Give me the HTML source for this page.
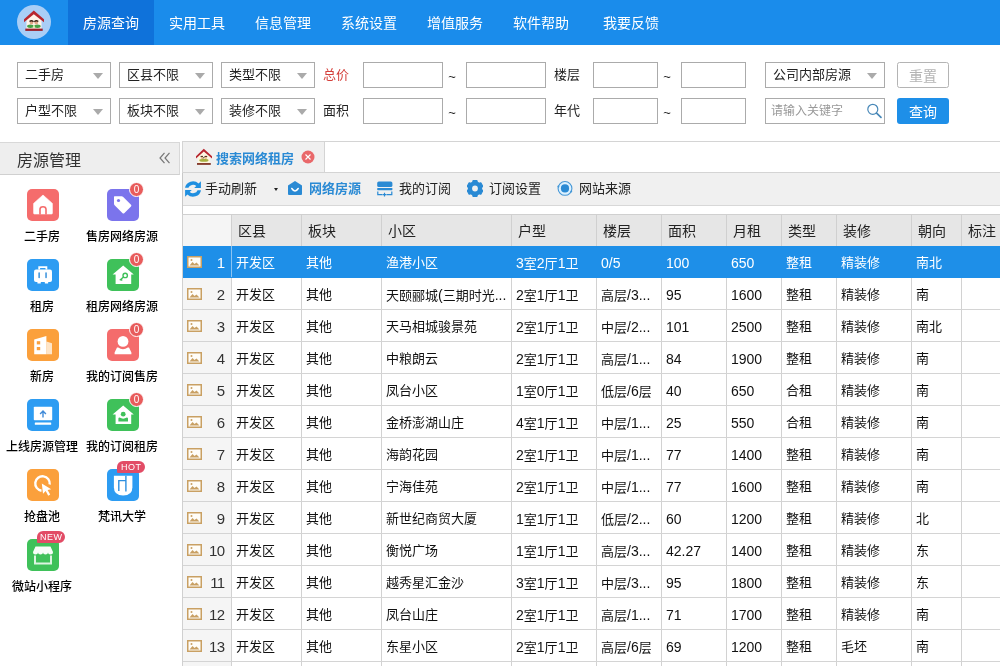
<!DOCTYPE html>
<html lang="zh-CN">
<head>
<meta charset="utf-8">
<title>房源管理</title>
<style>
*{box-sizing:border-box;margin:0;padding:0}
html,body{width:1000px;height:666px;overflow:hidden;background:#fff}
body{will-change:transform}
body{font-family:"Liberation Sans","Noto Sans CJK SC",sans-serif;font-size:13px;color:#222;position:relative}
svg{display:block}
#hdr{position:absolute;left:0;top:0;width:1000px;height:45px;background:#1a8ceb}
#logo{position:absolute;left:17px;top:5px;width:34px;height:34px;border-radius:50%;background:#a9cef6}
#logo svg{position:absolute;left:0;top:0}
.nav{position:absolute;top:0;height:45px;line-height:47px;color:#fff;font-size:14px;text-align:center;width:86px}
.nav.on{background:#0f72da}
.sel,.inp{position:absolute;height:26px;border:1px solid #ababab;background:#fff;font-size:13px;line-height:24px;padding-left:7px;color:#222;white-space:nowrap}
.sel i{position:absolute;right:7px;top:10px;width:0;height:0;border-left:5px solid transparent;border-right:5px solid transparent;border-top:6px solid #aaa}
.kw{font-size:12px;color:#999;padding-left:5px}
.kw svg{position:absolute;right:1px;top:3px}
.lbl{position:absolute;font-size:13px;line-height:26px;height:26px;color:#222;white-space:nowrap}
.lbl.red{color:#d43f3a}
.lbl.tl{width:8px;text-align:center;margin-top:2px}
.btn{position:absolute;width:52px;height:26px;border-radius:3px;font-size:14px;line-height:25px;text-align:center}
.b1{border:1px solid #b4b4b4;color:#b4b4b4;background:#fff;border-radius:2.500px;line-height:26px}
.b2{background:#1e8fe8;color:#fff;line-height:28px}
#sbh{position:absolute;left:0;top:142px;width:180px;height:33px;background:#eee;border-top:1px solid #d8d8d8;border-bottom:1px solid #d0d0d0;border-right:1px solid #d8d8d8;font-size:16px;line-height:35px;padding-left:17px;color:#333}
#sbh svg{position:absolute;left:159px;top:9px}
.ic{position:absolute;width:32px;height:32px;border-radius:5px}
.ic svg{position:absolute;left:0;top:0}
.il{position:absolute;width:100px;text-align:center;font-size:12px;line-height:14px;margin:1px 0 0 -1px;color:#000;font-weight:500;white-space:nowrap}
.bdg{position:absolute;width:15px;height:15px;border-radius:50%;background:#e85c5c;border:1px solid #fff;color:#fff;font-size:10px;line-height:13px;text-align:center}
.tag{position:absolute;width:28px;height:12px;border-radius:6px 6px 6px 1px;background:#e24c66;color:#fff;font-size:9px;line-height:12px;text-align:center;letter-spacing:.4px;padding-left:.4px}
#tabbar{position:absolute;left:182px;top:141px;width:818px;height:32px;border-top:1px solid #d4d4d4;border-bottom:1px solid #d4d4d4;border-left:1px solid #d4d4d4;background:#fff}
#tab{position:absolute;left:0;top:0;width:142px;height:30px;background:#f0f0f0;border-right:1px solid #d4d4d4}
#tab b{position:absolute;left:33px;top:0;line-height:33px;font-size:13px;color:#2a8ad4;white-space:nowrap}
#tab svg.h{position:absolute;left:12px;top:6px}
#tab svg.x{position:absolute;left:118px;top:8px}
#tool{position:absolute;left:183px;top:173px;width:817px;height:33px;background:#f0f0f0;border-bottom:1px solid #d8d8d8}
#vl{position:absolute;left:182px;top:141px;width:1px;height:525px;background:#c8c8c8}
#tool svg{position:absolute;top:8px}
.tt{position:absolute;top:0;line-height:32px;font-size:13px;color:#222;white-space:nowrap}
.tt.blue{color:#2a8ad4}
.dd{position:absolute;left:91px;top:15px;width:0;height:0;border-left:2.500px solid transparent;border-right:2.500px solid transparent;border-top:3px solid #222}
#tbl{position:absolute;left:182px;top:214px;width:818px;height:452px;border-left:1px solid #d0d0d0;border-top:1px solid #d0d0d0;overflow:hidden}
.th{position:absolute;top:0;height:31px;background:#e6e6e6;border-right:1px solid #d0d0d0;font-size:14px;line-height:33px;padding-left:6px;color:#222;white-space:nowrap}
.th0{background:#f5f5f5}
.row{position:absolute;left:0;width:818px;height:32px;border-bottom:1px solid #d4d4d4;background:#fff}
.row.s{background:#1e8fe8;color:#fff;border-bottom-color:#1e8fe8}
.c{position:absolute;top:0;height:31px;line-height:34px;color:#111;padding-left:4px;border-right:1px solid #d2d2d2;font-size:13px;white-space:nowrap;overflow:hidden}
.row.s .c{border-right-color:#1e8fe8;color:#fff}
.c0{left:0;width:49px;background:#f5f5f5;text-align:right;padding-right:6px;font-size:15px;letter-spacing:-.6px;padding-right:6.500px;color:#333}
.n{font-size:14px}
.row.s .c0{background:transparent;color:#fff;border-right-color:#8cc4f2}
.c0 svg{position:absolute;left:4px;top:10px}
</style>
</head>
<body>
<div id="hdr">
<div id="logo"><svg width="34" height="34" viewBox="0 0 34 34"><path d="M9.500 14.500 L16.800 8 L24.500 14.500 V24 H9.500 Z" fill="#fff4ea"/><path d="M7 14.200 L16.800 5.600 L27 14.200 L27 17.200 L16.800 9.200 L7 17.200 Z" fill="#b8262e"/><rect x="8.300" y="23.600" width="17.400" height="2.300" fill="#9c1f2a"/><ellipse cx="13.400" cy="21.200" rx="3.300" ry="1.700" fill="#43a047"/><ellipse cx="20.400" cy="21.200" rx="3.300" ry="1.700" fill="#43a047"/><circle cx="14.500" cy="17.800" r="1.800" fill="#e2a98a"/><circle cx="19.300" cy="17.800" r="1.800" fill="#e2a98a"/><path d="M12.500 16.600 Q14.500 14.800 16.500 16.800 M17.300 16.800 Q19.300 14.800 21.300 16.600" stroke="#3e2416" stroke-width="1.300" fill="none"/><circle cx="16.900" cy="21.600" r="1.100" fill="#c8f0a0"/></svg></div>
<div class="nav on" style="left:68px">房源查询</div>
<div class="nav" style="left:154px">实用工具</div>
<div class="nav" style="left:240px">信息管理</div>
<div class="nav" style="left:326px">系统设置</div>
<div class="nav" style="left:412px">增值服务</div>
<div class="nav" style="left:498px">软件帮助</div>
<div class="nav" style="left:588px">我要反馈</div>
</div>
<div id="flt">
<div class="sel" style="left:17px;top:62px;width:94px">二手房<i></i></div>
<div class="sel" style="left:119px;top:62px;width:94px">区县不限<i></i></div>
<div class="sel" style="left:221px;top:62px;width:94px">类型不限<i></i></div>
<div class="sel" style="left:17px;top:98px;width:94px">户型不限<i></i></div>
<div class="sel" style="left:119px;top:98px;width:94px">板块不限<i></i></div>
<div class="sel" style="left:221px;top:98px;width:94px">装修不限<i></i></div>
<div class="lbl red" style="left:323px;top:62px">总价</div>
<div class="lbl" style="left:323px;top:98px">面积</div>
<div class="inp" style="left:363px;top:62px;width:80px"></div>
<div class="inp" style="left:466px;top:62px;width:80px"></div>
<div class="inp" style="left:363px;top:98px;width:80px"></div>
<div class="inp" style="left:466px;top:98px;width:80px"></div>
<div class="lbl tl" style="left:448px;top:62px">~</div>
<div class="lbl tl" style="left:448px;top:98px">~</div>
<div class="lbl" style="left:554px;top:62px">楼层</div>
<div class="lbl" style="left:554px;top:98px">年代</div>
<div class="inp" style="left:593px;top:62px;width:65px"></div>
<div class="inp" style="left:681px;top:62px;width:65px"></div>
<div class="inp" style="left:593px;top:98px;width:65px"></div>
<div class="inp" style="left:681px;top:98px;width:65px"></div>
<div class="lbl tl" style="left:663px;top:62px">~</div>
<div class="lbl tl" style="left:663px;top:98px">~</div>
<div class="sel" style="left:765px;top:62px;width:120px">公司内部房源<i></i></div>
<div class="inp kw" style="left:765px;top:98px;width:120px">请输入关键字<svg width="18" height="18" viewBox="0 0 18 18"><circle cx="7.800" cy="7.300" r="5" fill="none" stroke="#4888b8" stroke-width="1.200"/><path d="M11.600 11.200 L16 15.400" stroke="#4888b8" stroke-width="1.700" stroke-linecap="round"/></svg></div>
<div class="btn b1" style="left:897px;top:62px">重置</div>
<div class="btn b2" style="left:897px;top:98px">查询</div>
</div>
<div id="sbh">房源管理<svg width="12" height="12" viewBox="0 0 12 12"><path d="M5.5 0.8 L1 6 L5.5 11.2 M10.5 0.8 L6 6 L10.5 11.2" fill="none" stroke="#777" stroke-width="1.2"/></svg></div>
<div class="ic" style="left:27px;top:189px;background:#f56c6c"><svg width="32" height="32" viewBox="0 0 32 32"><path d="M16 6 L25.400 14.400 V24.200 Q25.400 25 24.600 25 H7.400 Q6.600 25 6.600 24.200 V14.400 Z" fill="#fff" stroke="#fff" stroke-width=".6" stroke-linejoin="round"/><path d="M13 25.500 V20.300 Q13 17.700 16 17.700 Q19 17.700 19 20.300 V25.500" fill="none" stroke="#f56c6c" stroke-width="1.600"/></svg></div>
<div class="il" style="left:-7px;top:229px">二手房</div>
<div class="ic" style="left:107px;top:189px;background:#7b74ec"><svg width="32" height="32" viewBox="0 0 32 32"><path d="M7.600 7.200 H14.600 Q15.400 7.200 16 7.800 L24 15.800 Q24.800 16.600 24 17.400 L17.200 24.200 Q16.400 25 15.600 24.200 L7.600 16.200 Q7 15.600 7 14.800 V7.800 Q7 7.200 7.600 7.200 Z" fill="#fff"/><circle cx="11.500" cy="11.500" r="1.600" fill="#7b74ec"/></svg></div>
<div class="bdg" style="left:129px;top:182px">0</div>
<div class="il" style="left:73px;top:229px">售房网络房源</div>
<div class="ic" style="left:27px;top:259px;background:#2d9cf2"><svg width="32" height="32" viewBox="0 0 32 32"><rect x="7" y="10.500" width="18" height="12.600" rx="2" fill="#fff"/><path d="M12.200 10.500 V8.200 H19.400 V10.500" fill="none" stroke="#fff" stroke-width="1.800"/><rect x="10.400" y="22.500" width="3.400" height="2.100" rx=".5" fill="#fff"/><rect x="17.800" y="22.500" width="3.400" height="2.100" rx=".5" fill="#fff"/><rect x="11.300" y="13.200" width="1.700" height="6" rx=".8" fill="#4f9ee0"/><rect x="18.200" y="13.200" width="1.700" height="6" rx=".8" fill="#4f9ee0"/></svg></div>
<div class="il" style="left:-7px;top:299px">租房</div>
<div class="ic" style="left:107px;top:259px;background:#3fc15a"><svg width="32" height="32" viewBox="0 0 32 32"><path d="M16.200 6.500 L26.800 15.600 H24.200 V25 H8.600 V15.600 H5.600 Z" fill="#fff"/><circle cx="18.200" cy="16.400" r="2.200" fill="none" stroke="#3fc15a" stroke-width="1.400"/><path d="M16.600 18 L12.800 21.300 M14 20.200 L15.200 21.500" stroke="#3fc15a" stroke-width="1.400" fill="none"/></svg></div>
<div class="bdg" style="left:129px;top:252px">0</div>
<div class="il" style="left:73px;top:299px">租房网络房源</div>
<div class="ic" style="left:27px;top:329px;background:#fba03c"><svg width="32" height="32" viewBox="0 0 32 32"><path d="M7.200 10.500 L19.400 7 V25.200 H7.200 Z" fill="#fff"/><path d="M19.400 12.500 L25 14.300 V25.200 H19.400 Z" fill="#fff" opacity=".72"/><rect x="9.800" y="12.200" width="3.400" height="3.200" fill="#fba03c"/><rect x="9.800" y="18" width="3.400" height="3.200" fill="#fba03c"/></svg></div>
<div class="il" style="left:-7px;top:369px">新房</div>
<div class="ic" style="left:107px;top:329px;background:#f46c6c"><svg width="32" height="32" viewBox="0 0 32 32"><circle cx="16" cy="12.400" r="5.400" fill="#fff"/><path d="M7.600 25.300 V23.500 L10 18.600 H11.200 Q16 22 20.800 18.600 H22 L24.400 23.500 V25.300 Z" fill="#fff"/></svg></div>
<div class="bdg" style="left:129px;top:322px">0</div>
<div class="il" style="left:73px;top:369px">我的订阅售房</div>
<div class="ic" style="left:27px;top:399px;background:#2d9cf2"><svg width="32" height="32" viewBox="0 0 32 32"><rect x="6.800" y="7.800" width="18.400" height="13.400" rx=".8" fill="#fff"/><rect x="7.800" y="23.600" width="16.400" height="2.200" rx=".5" fill="#fff"/><path d="M16 11 L19.400 14.400 L18.400 15.400 L16.700 13.700 V18.400 H15.300 V13.700 L13.600 15.400 L12.600 14.400 Z" fill="#3f8ad8"/></svg></div>
<div class="il" style="left:-7px;top:439px">上线房源管理</div>
<div class="ic" style="left:107px;top:399px;background:#3fc15a"><svg width="32" height="32" viewBox="0 0 32 32"><path d="M16.200 6.500 L26.800 15.600 H24.200 V25 H8.600 V15.600 H5.600 Z" fill="#fff"/><circle cx="16.200" cy="15.200" r="2.400" fill="#3fc15a"/><path d="M11.400 22.600 V19.600 Q11.400 18.600 12.600 18.600 Q16.200 20.800 19.800 18.600 Q21 18.600 21 19.600 V22.600 Z" fill="#3fc15a"/></svg></div>
<div class="bdg" style="left:129px;top:392px">0</div>
<div class="il" style="left:73px;top:439px">我的订阅租房</div>
<div class="ic" style="left:27px;top:469px;background:#fba03c"><svg width="32" height="32" viewBox="0 0 32 32"><path d="M22.700 15.500 A7.250 7.250 0 1 0 14.500 21.700" fill="none" stroke="#fff" stroke-width="2.400"/><path d="M14.800 14.500 L24.200 20.200 L20.600 21 L23.200 25.600 L21.200 26.700 L18.700 22.100 L16 24.800 Z" fill="#fff"/></svg></div>
<div class="il" style="left:-7px;top:509px">抢盘池</div>
<div class="ic" style="left:107px;top:469px;background:#2d9cf2"><svg width="32" height="32" viewBox="0 0 32 32"><path d="M6.900 6.800 H25.400 V18.200 Q25.400 26.400 16.150 26.400 Q6.900 26.400 6.900 18.200 Z" fill="#fff"/><path d="M18.900 6.800 V22.400 M18.900 11.600 H11.800 V22" fill="none" stroke="#2d8fe0" stroke-width="1.400"/></svg></div>
<div class="tag" style="left:117px;top:461px">HOT</div>
<div class="il" style="left:73px;top:509px">梵讯大学</div>
<div class="ic" style="left:27px;top:539px;background:#3fc15a"><svg width="32" height="32" viewBox="0 0 32 32"><path d="M8.500 7.500 H23.500 L26 13 Q26 15.500 23.500 15.500 Q21 15.500 21 13.500 Q21 15.500 18.500 15.500 Q16 15.500 16 13.500 Q16 15.500 13.500 15.500 Q11 15.500 11 13.500 Q11 15.500 8.500 15.500 Q6 15.500 6 13 Z" fill="#fff" opacity=".96"/><path d="M8 16.500 V24.600 H24 V16.500" fill="none" stroke="#fff" stroke-width="2" opacity=".82"/></svg></div>
<div class="tag" style="left:37px;top:531px">NEW</div>
<div class="il" style="left:-7px;top:579px">微站小程序</div>
<div id="vl"></div>
<div id="tabbar"><div id="tab"><svg class="h" width="18" height="18" viewBox="0 0 18 18"><path d="M3 8.500 L8.800 3.500 L14.800 8.500 V15.500 H3 Z" fill="#fff6e0"/><path d="M1 8.200 L8.800 0.800 L17 8.200 L17 10.500 L8.800 3.400 L1 10.500 Z" fill="#b8262e"/><rect x="2" y="15.100" width="13.800" height="1.700" fill="#7a2a1a"/><ellipse cx="8.900" cy="12.200" rx="4.600" ry="1.500" fill="#a8b040"/><circle cx="7" cy="9.800" r="1.300" fill="#e8c090"/><circle cx="10.800" cy="9.800" r="1.300" fill="#e8c090"/><path d="M5.600 8.400 H8 M9.800 8.400 H12.200 M9.600 8.600 L8.200 10.400" stroke="#3e2416" stroke-width="1" fill="none"/></svg><b>搜索网络租房</b><svg class="x" width="14" height="14" viewBox="0 0 14 14"><circle cx="7" cy="7" r="6.500" fill="#e9686a"/><path d="M4.500 4.500 L9.500 9.500 M9.500 4.500 L4.500 9.500" stroke="#fff" stroke-width="1.100"/></svg></div></div>
<div id="tool">
<svg style="left:1px;top:7px" width="18" height="18" viewBox="0 0 18 18"><path d="M1 7.800 A8 7.800 0 0 1 14.600 3.600 L16.900 1.200 V8 H10.200 L12.300 5.900 A5 4.800 0 0 0 4.400 7.800 Z" fill="#1f8fe0"/><path d="M17 10.200 A8 7.800 0 0 1 3.400 14.400 L1.100 16.800 V10 H7.800 L5.700 12.100 A5 4.800 0 0 0 13.600 10.200 Z" fill="#1f8fe0"/></svg>
<span class="tt" style="left:22px">手动刷新</span>
<i class="dd"></i>
<svg style="left:104px;top:7px" width="16" height="16" viewBox="0 0 16 16"><path d="M8 1 L15 5.500 V14 Q15 15 14 15 H2 Q1 15 1 14 V5.500 Z" fill="#2a8ad4"/><path d="M4.800 8.500 Q8 13.500 11.200 8.500" fill="none" stroke="#fff" stroke-width="1.500" stroke-linecap="round"/></svg>
<b class="tt blue" style="left:126px">网络房源</b>
<svg style="left:194px;top:7.500px" width="16" height="16" viewBox="0 0 16 16"><rect x=".2" y=".5" width="15.200" height="5.600" rx="1.600" fill="#2a8ad4"/><rect x=".2" y="6.900" width="15.200" height="2.300" rx=".6" fill="#2a8ad4"/><path d="M.8 10.600 V13.600 H5.400 M9.600 13.600 H14.800 V10.600" fill="none" stroke="#2a8ad4" stroke-width="1.200"/><path d="M5.600 13.600 H9.400 M7.500 11.800 V15.400" stroke="#2a8ad4" stroke-width="1.200"/></svg>
<span class="tt" style="left:216px">我的订阅</span>
<svg style="left:284px;top:7px" width="16" height="17" viewBox="0 0 16 17"><path d="M10.37 2.34 L9.96 0.64 L6.04 0.64 L5.63 2.34 L3.85 3.37 L2.17 2.87 L0.21 6.27 L1.48 7.47 L1.48 9.53 L0.21 10.73 L2.17 14.13 L3.85 13.63 L5.63 14.66 L6.04 16.36 L9.96 16.36 L10.37 14.66 L12.15 13.63 L13.83 14.13 L15.79 10.73 L14.52 9.53 L14.52 7.47 L15.79 6.27 L13.83 2.87 L12.15 3.37 Z" fill="#2a8ad4" stroke="#2a8ad4" stroke-width="1.2" stroke-linejoin="round"/><circle cx="8" cy="8.500" r="2.900" fill="#f0f0f0"/></svg>
<span class="tt" style="left:306px">订阅设置</span>
<svg style="left:373px;top:7px" width="18" height="17" viewBox="0 0 18 17"><circle cx="9" cy="8.400" r="6.900" fill="#dcf1ff" stroke="#4597d6" stroke-width="1.100"/><circle cx="9" cy="8.400" r="4.100" fill="#2a8ad4"/><circle cx="2.400" cy="6.600" r="1" fill="#4597d6"/><circle cx="15.200" cy="11.600" r="1" fill="#4597d6"/></svg>
<span class="tt" style="left:396px">网站来源</span>
</div>
<div id="tbl">
<div class="th th0" style="left:0;width:49px"></div>
<div class="th" style="left:49px;width:70px">区县</div>
<div class="th" style="left:119px;width:80px">板块</div>
<div class="th" style="left:199px;width:130px">小区</div>
<div class="th" style="left:329px;width:85px">户型</div>
<div class="th" style="left:414px;width:65px">楼层</div>
<div class="th" style="left:479px;width:65px">面积</div>
<div class="th" style="left:544px;width:55px">月租</div>
<div class="th" style="left:599px;width:55px">类型</div>
<div class="th" style="left:654px;width:75px">装修</div>
<div class="th" style="left:729px;width:50px">朝向</div>
<div class="th" style="left:779px;width:60px">标注</div>
<div class="row s" style="top:31px">
<div class="c c0"><svg width="15" height="12" viewBox="0 0 15 12"><rect x=".75" y=".75" width="13.500" height="10.500" fill="#fffdf8" stroke="#c9a063" stroke-width="1.500"/><path d="M2.500 9.500 L5.500 6 L7.500 8 L9.500 6.500 L12.500 9.500 Z" fill="#c9a063"/><circle cx="4.500" cy="4" r="1" fill="#c9a063"/></svg>1</div>
<div class="c" style="left:49px;width:70px">开发区</div>
<div class="c" style="left:119px;width:80px">其他</div>
<div class="c" style="left:199px;width:130px">渔港小区</div>
<div class="c" style="left:329px;width:85px"><span class="n">3</span>室<span class="n">2</span>厅<span class="n">1</span>卫</div>
<div class="c" style="left:414px;width:65px"><span class="n">0/5</span></div>
<div class="c" style="left:479px;width:65px"><span class="n">100</span></div>
<div class="c" style="left:544px;width:55px"><span class="n">650</span></div>
<div class="c" style="left:599px;width:55px">整租</div>
<div class="c" style="left:654px;width:75px">精装修</div>
<div class="c" style="left:729px;width:50px">南北</div>
<div class="c" style="left:779px;width:60px"></div>
</div>
<div class="row" style="top:63px">
<div class="c c0"><svg width="15" height="12" viewBox="0 0 15 12"><rect x=".75" y=".75" width="13.500" height="10.500" fill="#fffdf8" stroke="#c9a063" stroke-width="1.500"/><path d="M2.500 9.500 L5.500 6 L7.500 8 L9.500 6.500 L12.500 9.500 Z" fill="#c9a063"/><circle cx="4.500" cy="4" r="1" fill="#c9a063"/></svg>2</div>
<div class="c" style="left:49px;width:70px">开发区</div>
<div class="c" style="left:119px;width:80px">其他</div>
<div class="c" style="left:199px;width:130px">天颐郦城<span class="n">(</span>三期时光<span class="n">...</span></div>
<div class="c" style="left:329px;width:85px"><span class="n">2</span>室<span class="n">1</span>厅<span class="n">1</span>卫</div>
<div class="c" style="left:414px;width:65px">高层<span class="n">/3...</span></div>
<div class="c" style="left:479px;width:65px"><span class="n">95</span></div>
<div class="c" style="left:544px;width:55px"><span class="n">1600</span></div>
<div class="c" style="left:599px;width:55px">整租</div>
<div class="c" style="left:654px;width:75px">精装修</div>
<div class="c" style="left:729px;width:50px">南</div>
<div class="c" style="left:779px;width:60px"></div>
</div>
<div class="row" style="top:95px">
<div class="c c0"><svg width="15" height="12" viewBox="0 0 15 12"><rect x=".75" y=".75" width="13.500" height="10.500" fill="#fffdf8" stroke="#c9a063" stroke-width="1.500"/><path d="M2.500 9.500 L5.500 6 L7.500 8 L9.500 6.500 L12.500 9.500 Z" fill="#c9a063"/><circle cx="4.500" cy="4" r="1" fill="#c9a063"/></svg>3</div>
<div class="c" style="left:49px;width:70px">开发区</div>
<div class="c" style="left:119px;width:80px">其他</div>
<div class="c" style="left:199px;width:130px">天马相城骏景苑</div>
<div class="c" style="left:329px;width:85px"><span class="n">2</span>室<span class="n">1</span>厅<span class="n">1</span>卫</div>
<div class="c" style="left:414px;width:65px">中层<span class="n">/2...</span></div>
<div class="c" style="left:479px;width:65px"><span class="n">101</span></div>
<div class="c" style="left:544px;width:55px"><span class="n">2500</span></div>
<div class="c" style="left:599px;width:55px">整租</div>
<div class="c" style="left:654px;width:75px">精装修</div>
<div class="c" style="left:729px;width:50px">南北</div>
<div class="c" style="left:779px;width:60px"></div>
</div>
<div class="row" style="top:127px">
<div class="c c0"><svg width="15" height="12" viewBox="0 0 15 12"><rect x=".75" y=".75" width="13.500" height="10.500" fill="#fffdf8" stroke="#c9a063" stroke-width="1.500"/><path d="M2.500 9.500 L5.500 6 L7.500 8 L9.500 6.500 L12.500 9.500 Z" fill="#c9a063"/><circle cx="4.500" cy="4" r="1" fill="#c9a063"/></svg>4</div>
<div class="c" style="left:49px;width:70px">开发区</div>
<div class="c" style="left:119px;width:80px">其他</div>
<div class="c" style="left:199px;width:130px">中粮朗云</div>
<div class="c" style="left:329px;width:85px"><span class="n">2</span>室<span class="n">1</span>厅<span class="n">1</span>卫</div>
<div class="c" style="left:414px;width:65px">高层<span class="n">/1...</span></div>
<div class="c" style="left:479px;width:65px"><span class="n">84</span></div>
<div class="c" style="left:544px;width:55px"><span class="n">1900</span></div>
<div class="c" style="left:599px;width:55px">整租</div>
<div class="c" style="left:654px;width:75px">精装修</div>
<div class="c" style="left:729px;width:50px">南</div>
<div class="c" style="left:779px;width:60px"></div>
</div>
<div class="row" style="top:159px">
<div class="c c0"><svg width="15" height="12" viewBox="0 0 15 12"><rect x=".75" y=".75" width="13.500" height="10.500" fill="#fffdf8" stroke="#c9a063" stroke-width="1.500"/><path d="M2.500 9.500 L5.500 6 L7.500 8 L9.500 6.500 L12.500 9.500 Z" fill="#c9a063"/><circle cx="4.500" cy="4" r="1" fill="#c9a063"/></svg>5</div>
<div class="c" style="left:49px;width:70px">开发区</div>
<div class="c" style="left:119px;width:80px">其他</div>
<div class="c" style="left:199px;width:130px">凤台小区</div>
<div class="c" style="left:329px;width:85px"><span class="n">1</span>室<span class="n">0</span>厅<span class="n">1</span>卫</div>
<div class="c" style="left:414px;width:65px">低层<span class="n">/6</span>层</div>
<div class="c" style="left:479px;width:65px"><span class="n">40</span></div>
<div class="c" style="left:544px;width:55px"><span class="n">650</span></div>
<div class="c" style="left:599px;width:55px">合租</div>
<div class="c" style="left:654px;width:75px">精装修</div>
<div class="c" style="left:729px;width:50px">南</div>
<div class="c" style="left:779px;width:60px"></div>
</div>
<div class="row" style="top:191px">
<div class="c c0"><svg width="15" height="12" viewBox="0 0 15 12"><rect x=".75" y=".75" width="13.500" height="10.500" fill="#fffdf8" stroke="#c9a063" stroke-width="1.500"/><path d="M2.500 9.500 L5.500 6 L7.500 8 L9.500 6.500 L12.500 9.500 Z" fill="#c9a063"/><circle cx="4.500" cy="4" r="1" fill="#c9a063"/></svg>6</div>
<div class="c" style="left:49px;width:70px">开发区</div>
<div class="c" style="left:119px;width:80px">其他</div>
<div class="c" style="left:199px;width:130px">金桥澎湖山庄</div>
<div class="c" style="left:329px;width:85px"><span class="n">4</span>室<span class="n">1</span>厅<span class="n">1</span>卫</div>
<div class="c" style="left:414px;width:65px">中层<span class="n">/1...</span></div>
<div class="c" style="left:479px;width:65px"><span class="n">25</span></div>
<div class="c" style="left:544px;width:55px"><span class="n">550</span></div>
<div class="c" style="left:599px;width:55px">合租</div>
<div class="c" style="left:654px;width:75px">精装修</div>
<div class="c" style="left:729px;width:50px">南</div>
<div class="c" style="left:779px;width:60px"></div>
</div>
<div class="row" style="top:223px">
<div class="c c0"><svg width="15" height="12" viewBox="0 0 15 12"><rect x=".75" y=".75" width="13.500" height="10.500" fill="#fffdf8" stroke="#c9a063" stroke-width="1.500"/><path d="M2.500 9.500 L5.500 6 L7.500 8 L9.500 6.500 L12.500 9.500 Z" fill="#c9a063"/><circle cx="4.500" cy="4" r="1" fill="#c9a063"/></svg>7</div>
<div class="c" style="left:49px;width:70px">开发区</div>
<div class="c" style="left:119px;width:80px">其他</div>
<div class="c" style="left:199px;width:130px">海韵花园</div>
<div class="c" style="left:329px;width:85px"><span class="n">2</span>室<span class="n">1</span>厅<span class="n">1</span>卫</div>
<div class="c" style="left:414px;width:65px">中层<span class="n">/1...</span></div>
<div class="c" style="left:479px;width:65px"><span class="n">77</span></div>
<div class="c" style="left:544px;width:55px"><span class="n">1400</span></div>
<div class="c" style="left:599px;width:55px">整租</div>
<div class="c" style="left:654px;width:75px">精装修</div>
<div class="c" style="left:729px;width:50px">南</div>
<div class="c" style="left:779px;width:60px"></div>
</div>
<div class="row" style="top:255px">
<div class="c c0"><svg width="15" height="12" viewBox="0 0 15 12"><rect x=".75" y=".75" width="13.500" height="10.500" fill="#fffdf8" stroke="#c9a063" stroke-width="1.500"/><path d="M2.500 9.500 L5.500 6 L7.500 8 L9.500 6.500 L12.500 9.500 Z" fill="#c9a063"/><circle cx="4.500" cy="4" r="1" fill="#c9a063"/></svg>8</div>
<div class="c" style="left:49px;width:70px">开发区</div>
<div class="c" style="left:119px;width:80px">其他</div>
<div class="c" style="left:199px;width:130px">宁海佳苑</div>
<div class="c" style="left:329px;width:85px"><span class="n">2</span>室<span class="n">1</span>厅<span class="n">1</span>卫</div>
<div class="c" style="left:414px;width:65px">中层<span class="n">/1...</span></div>
<div class="c" style="left:479px;width:65px"><span class="n">77</span></div>
<div class="c" style="left:544px;width:55px"><span class="n">1600</span></div>
<div class="c" style="left:599px;width:55px">整租</div>
<div class="c" style="left:654px;width:75px">精装修</div>
<div class="c" style="left:729px;width:50px">南</div>
<div class="c" style="left:779px;width:60px"></div>
</div>
<div class="row" style="top:287px">
<div class="c c0"><svg width="15" height="12" viewBox="0 0 15 12"><rect x=".75" y=".75" width="13.500" height="10.500" fill="#fffdf8" stroke="#c9a063" stroke-width="1.500"/><path d="M2.500 9.500 L5.500 6 L7.500 8 L9.500 6.500 L12.500 9.500 Z" fill="#c9a063"/><circle cx="4.500" cy="4" r="1" fill="#c9a063"/></svg>9</div>
<div class="c" style="left:49px;width:70px">开发区</div>
<div class="c" style="left:119px;width:80px">其他</div>
<div class="c" style="left:199px;width:130px">新世纪商贸大厦</div>
<div class="c" style="left:329px;width:85px"><span class="n">1</span>室<span class="n">1</span>厅<span class="n">1</span>卫</div>
<div class="c" style="left:414px;width:65px">低层<span class="n">/2...</span></div>
<div class="c" style="left:479px;width:65px"><span class="n">60</span></div>
<div class="c" style="left:544px;width:55px"><span class="n">1200</span></div>
<div class="c" style="left:599px;width:55px">整租</div>
<div class="c" style="left:654px;width:75px">精装修</div>
<div class="c" style="left:729px;width:50px">北</div>
<div class="c" style="left:779px;width:60px"></div>
</div>
<div class="row" style="top:319px">
<div class="c c0"><svg width="15" height="12" viewBox="0 0 15 12"><rect x=".75" y=".75" width="13.500" height="10.500" fill="#fffdf8" stroke="#c9a063" stroke-width="1.500"/><path d="M2.500 9.500 L5.500 6 L7.500 8 L9.500 6.500 L12.500 9.500 Z" fill="#c9a063"/><circle cx="4.500" cy="4" r="1" fill="#c9a063"/></svg>10</div>
<div class="c" style="left:49px;width:70px">开发区</div>
<div class="c" style="left:119px;width:80px">其他</div>
<div class="c" style="left:199px;width:130px">衡悦广场</div>
<div class="c" style="left:329px;width:85px"><span class="n">1</span>室<span class="n">1</span>厅<span class="n">1</span>卫</div>
<div class="c" style="left:414px;width:65px">高层<span class="n">/3...</span></div>
<div class="c" style="left:479px;width:65px"><span class="n">42.27</span></div>
<div class="c" style="left:544px;width:55px"><span class="n">1400</span></div>
<div class="c" style="left:599px;width:55px">整租</div>
<div class="c" style="left:654px;width:75px">精装修</div>
<div class="c" style="left:729px;width:50px">东</div>
<div class="c" style="left:779px;width:60px"></div>
</div>
<div class="row" style="top:351px">
<div class="c c0"><svg width="15" height="12" viewBox="0 0 15 12"><rect x=".75" y=".75" width="13.500" height="10.500" fill="#fffdf8" stroke="#c9a063" stroke-width="1.500"/><path d="M2.500 9.500 L5.500 6 L7.500 8 L9.500 6.500 L12.500 9.500 Z" fill="#c9a063"/><circle cx="4.500" cy="4" r="1" fill="#c9a063"/></svg>11</div>
<div class="c" style="left:49px;width:70px">开发区</div>
<div class="c" style="left:119px;width:80px">其他</div>
<div class="c" style="left:199px;width:130px">越秀星汇金沙</div>
<div class="c" style="left:329px;width:85px"><span class="n">3</span>室<span class="n">1</span>厅<span class="n">1</span>卫</div>
<div class="c" style="left:414px;width:65px">中层<span class="n">/3...</span></div>
<div class="c" style="left:479px;width:65px"><span class="n">95</span></div>
<div class="c" style="left:544px;width:55px"><span class="n">1800</span></div>
<div class="c" style="left:599px;width:55px">整租</div>
<div class="c" style="left:654px;width:75px">精装修</div>
<div class="c" style="left:729px;width:50px">东</div>
<div class="c" style="left:779px;width:60px"></div>
</div>
<div class="row" style="top:383px">
<div class="c c0"><svg width="15" height="12" viewBox="0 0 15 12"><rect x=".75" y=".75" width="13.500" height="10.500" fill="#fffdf8" stroke="#c9a063" stroke-width="1.500"/><path d="M2.500 9.500 L5.500 6 L7.500 8 L9.500 6.500 L12.500 9.500 Z" fill="#c9a063"/><circle cx="4.500" cy="4" r="1" fill="#c9a063"/></svg>12</div>
<div class="c" style="left:49px;width:70px">开发区</div>
<div class="c" style="left:119px;width:80px">其他</div>
<div class="c" style="left:199px;width:130px">凤台山庄</div>
<div class="c" style="left:329px;width:85px"><span class="n">2</span>室<span class="n">1</span>厅<span class="n">1</span>卫</div>
<div class="c" style="left:414px;width:65px">高层<span class="n">/1...</span></div>
<div class="c" style="left:479px;width:65px"><span class="n">71</span></div>
<div class="c" style="left:544px;width:55px"><span class="n">1700</span></div>
<div class="c" style="left:599px;width:55px">整租</div>
<div class="c" style="left:654px;width:75px">精装修</div>
<div class="c" style="left:729px;width:50px">南</div>
<div class="c" style="left:779px;width:60px"></div>
</div>
<div class="row" style="top:415px">
<div class="c c0"><svg width="15" height="12" viewBox="0 0 15 12"><rect x=".75" y=".75" width="13.500" height="10.500" fill="#fffdf8" stroke="#c9a063" stroke-width="1.500"/><path d="M2.500 9.500 L5.500 6 L7.500 8 L9.500 6.500 L12.500 9.500 Z" fill="#c9a063"/><circle cx="4.500" cy="4" r="1" fill="#c9a063"/></svg>13</div>
<div class="c" style="left:49px;width:70px">开发区</div>
<div class="c" style="left:119px;width:80px">其他</div>
<div class="c" style="left:199px;width:130px">东星小区</div>
<div class="c" style="left:329px;width:85px"><span class="n">2</span>室<span class="n">1</span>厅<span class="n">1</span>卫</div>
<div class="c" style="left:414px;width:65px">高层<span class="n">/6</span>层</div>
<div class="c" style="left:479px;width:65px"><span class="n">69</span></div>
<div class="c" style="left:544px;width:55px"><span class="n">1200</span></div>
<div class="c" style="left:599px;width:55px">整租</div>
<div class="c" style="left:654px;width:75px">毛坯</div>
<div class="c" style="left:729px;width:50px">南</div>
<div class="c" style="left:779px;width:60px"></div>
</div>
<div class="row" style="top:447px">
<div class="c c0"><svg width="15" height="12" viewBox="0 0 15 12"><rect x=".75" y=".75" width="13.500" height="10.500" fill="#fffdf8" stroke="#c9a063" stroke-width="1.500"/><path d="M2.500 9.500 L5.500 6 L7.500 8 L9.500 6.500 L12.500 9.500 Z" fill="#c9a063"/><circle cx="4.500" cy="4" r="1" fill="#c9a063"/></svg>14</div>
<div class="c" style="left:49px;width:70px"></div>
<div class="c" style="left:119px;width:80px"></div>
<div class="c" style="left:199px;width:130px"></div>
<div class="c" style="left:329px;width:85px"></div>
<div class="c" style="left:414px;width:65px"></div>
<div class="c" style="left:479px;width:65px"></div>
<div class="c" style="left:544px;width:55px"></div>
<div class="c" style="left:599px;width:55px"></div>
<div class="c" style="left:654px;width:75px"></div>
<div class="c" style="left:729px;width:50px"></div>
<div class="c" style="left:779px;width:60px"></div>
</div>
</div>
</body>
</html>
